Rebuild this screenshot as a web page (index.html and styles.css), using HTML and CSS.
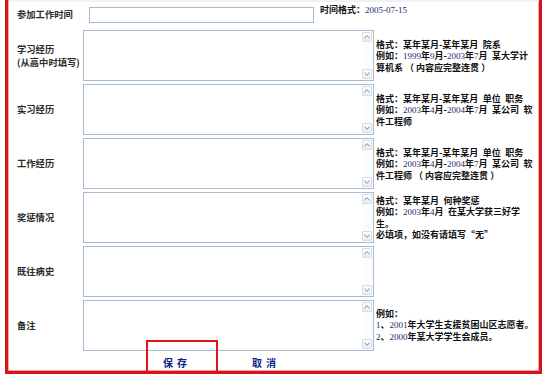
FILE: index.html
```html
<!DOCTYPE html>
<html lang="zh-CN">
<head>
  <meta charset="UTF-8" />
  <title>个人履历</title>
  <link rel="stylesheet" href="styles.css">
</head>
<body>

  <div class="frame">
    <div class="form">
      <div class="label">参加工作时间</div>
      <div class="field-line">
        <input type="text" class="text-input" />
        <span class="hint">时间格式：<em>2005-07-15</em></span>
      </div>

      <div class="label">学习经历<br>(从高中时填写)</div>
      <div class="area">
        <textarea></textarea>
        <div class="scroll">
          <span class="arrow"><svg viewBox="0 0 7 4"><polyline points="0.5,3.5 3.5,0.5 6.5,3.5" /></svg></span>
          <span class="arrow"><svg viewBox="0 0 7 4"><polyline points="0.5,0.5 3.5,3.5 6.5,0.5" /></svg></span>
        </div>
      </div>
      <div class="hint">格式：某年某月-某年某月&ensp;院系<br>例如：<em>1999</em>年<em>9</em>月-<em>2003</em>年<em>7</em>月&ensp;某大学计算机系 （ 内容应完整连贯 ）</div>

      <div class="label">实习经历</div>
      <div class="area">
        <textarea></textarea>
        <div class="scroll">
          <span class="arrow"><svg viewBox="0 0 7 4"><polyline points="0.5,3.5 3.5,0.5 6.5,3.5" /></svg></span>
          <span class="arrow"><svg viewBox="0 0 7 4"><polyline points="0.5,0.5 3.5,3.5 6.5,0.5" /></svg></span>
        </div>
      </div>
      <div class="hint">格式：某年某月-某年某月&ensp;单位&ensp;职务<br>例如：<em>2003</em>年<em>4</em>月-<em>2004</em>年<em>7</em>月&ensp;某公司&ensp;软件工程师</div>

      <div class="label">工作经历</div>
      <div class="area">
        <textarea></textarea>
        <div class="scroll">
          <span class="arrow"><svg viewBox="0 0 7 4"><polyline points="0.5,3.5 3.5,0.5 6.5,3.5" /></svg></span>
          <span class="arrow"><svg viewBox="0 0 7 4"><polyline points="0.5,0.5 3.5,3.5 6.5,0.5" /></svg></span>
        </div>
      </div>
      <div class="hint">格式：某年某月-某年某月&ensp;单位&ensp;职务<br>例如：<em>2003</em>年<em>4</em>月-<em>2004</em>年<em>7</em>月&ensp;某公司&ensp;软件工程师 （ 内容应完整连贯 ）</div>

      <div class="label">奖惩情况</div>
      <div class="area">
        <textarea></textarea>
        <div class="scroll">
          <span class="arrow"><svg viewBox="0 0 7 4"><polyline points="0.5,3.5 3.5,0.5 6.5,3.5" /></svg></span>
          <span class="arrow"><svg viewBox="0 0 7 4"><polyline points="0.5,0.5 3.5,3.5 6.5,0.5" /></svg></span>
        </div>
      </div>
      <div class="hint">格式：某年某月&ensp;何种奖惩<br>例如：<em>2003</em>年<em>4</em>月&ensp;在某大学获三好学生。<br>必填项，如没有请填写“无”</div>

      <div class="label">既往病史</div>
      <div class="area">
        <textarea></textarea>
        <div class="scroll">
          <span class="arrow"><svg viewBox="0 0 7 4"><polyline points="0.5,3.5 3.5,0.5 6.5,3.5" /></svg></span>
          <span class="arrow"><svg viewBox="0 0 7 4"><polyline points="0.5,0.5 3.5,3.5 6.5,0.5" /></svg></span>
        </div>
      </div>
      <div class="hint"></div>

      <div class="label">备注</div>
      <div class="area">
        <textarea></textarea>
        <div class="scroll">
          <span class="arrow"><svg viewBox="0 0 7 4"><polyline points="0.5,3.5 3.5,0.5 6.5,3.5" /></svg></span>
          <span class="arrow"><svg viewBox="0 0 7 4"><polyline points="0.5,0.5 3.5,3.5 6.5,0.5" /></svg></span>
        </div>
      </div>
      <div class="hint">例如：<br><em>1</em>、<em>2001</em>年大学生支援贫困山区志愿者。<br><em>2</em>、<em>2000</em>年某大学学生会成员。</div>

      <div class="actions">
        <a class="btn" href="#">保存</a>
        <a class="btn" href="#">取消</a>
      </div>
    </div>

    <div class="mark"></div>
  </div>

</body>
</html>
```

FILE: styles.css
```css
* {
  box-sizing: border-box;
}

body {
  margin: 0;
  background: #fff;
  font-family: "Noto Sans CJK SC", sans-serif;
  font-size: 9.3px;
  color: #111;
}

.frame {
  position: relative;
  width: 537px;
  height: 374px;
  margin-left: 5px;
  border: 3px solid #d8111a;
  border-top: 0;
  box-shadow: inset 1px 0 #f2a3a3, inset -1px 0 #f2a3a3, inset 0 -1px #f2a3a3;
}

.form {
  display: grid;
  grid-template-columns: 64px 291px 159px;
  grid-template-rows: 25px repeat(6, 51px) 17px;
  column-gap: 2px;
  row-gap: 3px;
  margin-left: 1px;
  padding: 0 0 0 8px;
  border-top: 2px solid #f1f2f3;
}

.label {
  display: flex;
  align-items: center;
  font-weight: bold;
  color: #2b2b2b;
  line-height: 13px;
}

.field-line {
  grid-column: 2 / 4;
  display: flex;
  align-items: center;
  gap: 6px;
}

.text-input {
  width: 225px;
  height: 16px;
  margin: 0 0 0 6px;
  padding: 0 2px;
  border: 1px solid #a8bbd3;
  font-size: 10px;
}

.hint {
  align-self: center;
  font-size: 9px;
  font-weight: bold;
  line-height: 11px;
  color: #111;
}

.hint em {
  font-style: normal;
  font-weight: normal;
  font-family: "Liberation Serif", serif;
  font-size: 9px;
  color: #1a2a70;
}

.field-line .hint {
  align-self: flex-start;
  margin-top: 2px;
}

.area {
  display: flex;
  border: 1px solid #a8bbd3;
  background: #fff;
}

.area textarea {
  flex: 1;
  border: 0;
  padding: 2px;
  resize: none;
  outline: none;
  font-size: 10px;
}

.scroll {
  width: 11px;
  display: flex;
  flex-direction: column;
  justify-content: space-between;
  padding: 1px 1px 1px 0;
  background: #fbfcfd;
}

.arrow {
  display: flex;
  align-items: center;
  justify-content: center;
  height: 10px;
  border: 1px solid #d3dce7;
  border-radius: 1px;
  background: linear-gradient(#ffffff, #e9eef4);
}

.arrow svg {
  width: 6px;
  height: 4px;
  fill: none;
  stroke: #98a4b4;
  stroke-width: 1.2;
}

.actions {
  grid-column: 1 / -1;
  display: flex;
  align-items: center;
  gap: 61px;
  padding-left: 146px;
}

.btn {
  font-size: 10px;
  font-weight: bold;
  letter-spacing: 4px;
  color: #0b1f86;
  text-decoration: none;
}

.mark {
  position: absolute;
  left: 138px;
  top: 340px;
  width: 72px;
  height: 34px;
  border: 2px solid #e5121b;
}
```
